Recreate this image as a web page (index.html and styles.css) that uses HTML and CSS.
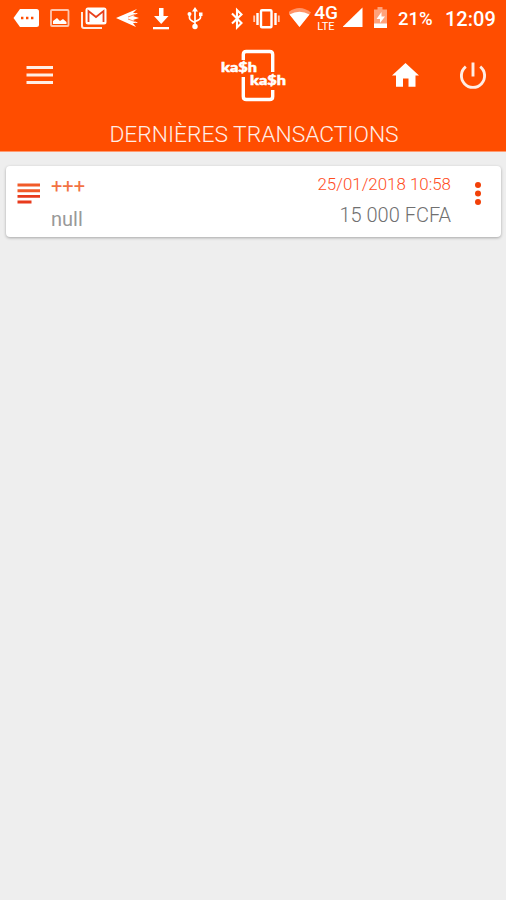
FILE: index.html
```html
<!DOCTYPE html>
<html lang="fr">
<head>
<meta charset="utf-8">
<title>Dernières transactions</title>
<link rel="stylesheet" href="styles.css">
</head>
<body>
<header class="header">
  <div class="status">
    <div class="status-left">
      <svg width="26" height="36" viewBox="13 0 26 36"><path fill="#fff" d="M20 9h16.500q2.500 0 2.500 2.500v13q0 2.500-2.500 2.500H20l-6.500-9z"/><path stroke="#ff4d00" stroke-width="2.400" stroke-dasharray="2.400 2.600" d="M21 18h13"/></svg>
      <svg width="20" height="36" viewBox="50 0 20 36"><rect x="51" y="10" width="17.500" height="16" rx="1" fill="none" stroke="#ffc5ad" stroke-width="1.800"/><path fill="#fff" d="M53 24v-3l4-3 3 3 3-2 3.500 3v2z"/></svg>
      <svg width="27" height="36" viewBox="81 0 27 36"><path d="M82 12v14q0 2 2 2h18" fill="none" stroke="#ffe9e0" stroke-width="2"/><rect x="85.500" y="7.500" width="21" height="17" rx="2.500" fill="#fff"/><path d="M88.500 22V11l7.500 6 7.500-6v11" fill="none" stroke="#e8401c" stroke-width="1.800"/></svg>
      <svg width="24" height="36" viewBox="116 0 24 36"><path fill="#fff" d="M116 18l21-9-4 4 5 0-5 3 6 2-6 2 5 3-5 0 3 4z"/><path d="M128 17l8-3M128 19l8 3" stroke="#ff7540" stroke-width=".8"/></svg>
      <svg width="18" height="36" viewBox="152 0 18 36"><path fill="#fff" d="M159 8h4.500v8h5l-7.300 8-7.200-8h5z"/><path fill="#fff" d="M153 27h16v2.300h-16z"/></svg>
      <svg width="16" height="36" viewBox="187 0 16 36"><path fill="none" stroke="#fff" stroke-width="1.700" d="M195 10v16M189.500 15v3q0 2 5.500 4.500M200.500 15v2.500q0 2-5.500 4"/><path fill="#fff" d="M195 7l3 4.500h-6zM199 12.500h3.500V16H199z"/><circle cx="189.500" cy="14" r="2" fill="#fff"/><circle cx="195" cy="26.500" r="2.700" fill="#fff"/></svg>
    </div>
    <div class="status-right">
      <svg width="14" height="36" viewBox="230 0 14 36"><path fill="none" stroke="#fff" stroke-width="2.100" d="M232 13.500l9.500 9.500-4.500 4.500V10l4.500 4.500-9.500 9"/></svg>
      <svg width="27" height="36" viewBox="253 0 27 36"><rect x="261" y="10.200" width="10.500" height="17" rx="1" fill="none" stroke="#fff" stroke-width="2.400"/><path d="M257.500 13v12M275.500 13v12" stroke="#fff" stroke-width="2.400"/><path d="M254.200 15.500v6.500M278.800 15.500v6.500" stroke="#ffcbb5" stroke-width="1.800"/></svg>
      <svg width="23" height="36" viewBox="289 0 23 36"><path fill="#ff9468" d="M288 12.500q11.500-9 23 0L299.500 27z"/><path fill="#fff" d="M289.500 14.500q10-5.500 20 0L299.500 27z"/></svg>
      <div class="network"><span class="gen">4G</span><span class="lte">LTE</span></div>
      <svg width="21" height="36" viewBox="343 0 21 36"><path fill="#fff" d="M342.500 27L362.500 7.500V27z"/></svg>
      <svg width="15" height="36" viewBox="373 0 15 36"><path fill="#ffa27b" d="M377.500 7h5v2.500h4.500V28h-13V9.500h3.500z"/><path fill="#fff" d="M374 23.500h13V28h-13zM381.500 12l-5 7h3.500v4l5-6.500h-3.500z"/></svg>
      <span class="battery">21%</span>
      <span class="clock">12:09</span>
    </div>
  </div>
  <div class="toolbar">
    <svg class="menu" width="28" height="22" viewBox="0 0 28 22"><path stroke="#ffeee6" stroke-width="3.200" d="M.5 3.500H27M.5 11H27M.5 18.500H27"/></svg>
    <svg class="logo" width="68" height="54" viewBox="220 48 68 54"><path fill="none" stroke="#fff" stroke-width="3.400" d="M243.300 60v-5.500q0-3 3-3h23.400q3 0 3 3V72M243.300 77v19.500q0 3 3 3h23.400q3 0 3-3V90"/><g class="logo-text"><text x="221" y="72" textLength="36" lengthAdjust="spacingAndGlyphs">ka$h</text><text x="250" y="85" textLength="36" lengthAdjust="spacingAndGlyphs">ka$h</text></g></svg>
    <svg class="home" width="28" height="26" viewBox="392 62 28 26"><path fill="#fff" d="M405.500 63L419 75.500h-3.500v11.300h-7V78.500h-5.500v8.300h-7V75.500H392z"/></svg>
    <svg class="power" width="28" height="28" viewBox="459 61 28 28"><path fill="none" stroke="#ffede5" stroke-width="2.900" d="M473 62.500V76.500M465.800 66.700a11.600 11.600 0 1 0 14.400 0"/></svg>
  </div>
  <h1 class="title"><span>DERNIÈRES TRANSACTIONS</span></h1>
</header>
<main>
  <article class="card">
    <svg class="list" width="24" height="22" viewBox="0 0 24 22"><path stroke="#f15a29" stroke-width="2.900" d="M.5 2H23M.5 7.700H23"/><path stroke="#e83a1c" stroke-width="2.900" d="M.5 13.400H23M.5 19H14.500"/></svg>
    <div class="details">
      <div class="plus">+++</div>
      <div class="name">null</div>
    </div>
    <div class="amounts">
      <div class="date">25/01/2018 10:58</div>
      <div class="amount">15 000 FCFA</div>
    </div>
    <svg class="more" width="8" height="26" viewBox="0 0 8 26"><g fill="#f24008"><circle cx="4" cy="4" r="3"/><circle cx="4" cy="12.500" r="3"/><circle cx="4" cy="21" r="3"/></g></svg>
  </article>
</main>
</body>
</html>
```
FILE: styles.css
```css
* { box-sizing: border-box; }
body { margin: 0; background: #eee; font-family: Roboto, sans-serif; min-height: 900px; }
svg { display: block; flex: none; }
.header { height: 152px; background: #ff4d00; color: #fff; border-bottom: 1px solid #ff9a70; }
.status { height: 36px; display: flex; justify-content: space-between; padding: 0 11px 0 13px; }
.status-left, .status-right { display: flex; }
.status-left { gap: 11px; }
.status-left svg:nth-child(4) { margin-left: -3px; }
.status-left svg:nth-child(5) { margin-left: 1px; }
.status-left svg:nth-child(6) { margin-left: 6px; }
.status-right { width: 265px; gap: 9px; }
.network { width: 24px; margin: 4px -4px 0 -7px; display: flex; flex-direction: column; align-items: center; }
.gen { font-size: 19px; line-height: 17px; font-weight: 500; }
.lte { font-size: 11px; line-height: 11px; }
.battery { font-size: 18.5px; line-height: 39px; font-weight: 500; width: 38px; margin-left: 1px; white-space: nowrap; }
.clock { font-size: 20px; line-height: 39px; font-weight: 500; width: 50px; white-space: nowrap; }
.toolbar { height: 81px; display: flex; align-items: flex-start; padding: 12px 19px 0 26px; }
.menu { margin-top: 16px; }
.logo { margin-left: 166px; }
.logo-text { font: 900 14px Lato, sans-serif; fill: #fff; stroke: #fff; stroke-width: .5; }
.home { margin: 14px 0 0 104px; }
.power { margin: 13px 0 0 39px; }
.title { margin: 0 0 0 2px; text-align: center; font-size: 22.8px; line-height: 35px; font-weight: 300; white-space: nowrap; color: #ffeee7; }
.card { margin: 14px 5px 0 6px; height: 71px; background: #fff; border-radius: 4px; box-shadow: 0 1px 3px rgba(0,0,0,.3); display: flex; padding-left: 11px; }
.list { margin-top: 17px; }
.details { margin-left: 10px; padding-top: 8px; }
.plus { font-size: 20px; line-height: 24px; color: #f27243; }
.name { font-size: 20px; line-height: 24px; margin-top: 9px; color: #999; }
.amounts { margin-left: auto; text-align: right; padding-top: 7px; white-space: nowrap; }
.date { font-size: 16.9px; line-height: 22px; font-weight: 300; color: #ff4d1d; }
.amount { font-size: 20px; line-height: 24px; margin-top: 8px; font-weight: 300; color: #707070; }
.more { margin: 15px 19px 0 23px; }
```
